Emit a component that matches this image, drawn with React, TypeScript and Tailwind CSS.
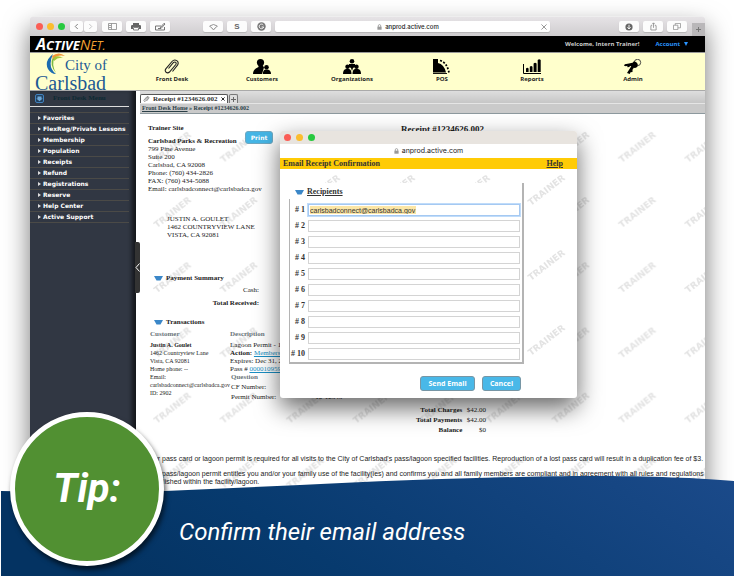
import React from "react";

const serif = "font-['Liberation_Serif',serif]";
const sans = "font-['Liberation_Sans',sans-serif]";
const ui = "font-['Open_Sans',sans-serif]";

function Watermark({ id, tile, x, y, color }: { id: string; tile: number[]; x: number; y: number; color: string }) {
  return (
    <svg className="pointer-events-none absolute inset-0 h-full w-full" aria-hidden="true">
      <defs>
        <pattern id={id} width={tile[0]} height={tile[1]} patternUnits="userSpaceOnUse" x={x} y={y}>
          <text
            transform="translate(5 37) rotate(-38)"
            className="font-['DejaVu_Sans',sans-serif] text-[9px] font-bold"
            fill={color}
          >
            TRAINER
          </text>
        </pattern>
      </defs>
      <rect width="100%" height="100%" fill={`url(#${id})`} />
    </svg>
  );
}

function Lights({ className }: { className: string }) {
  return (
    <div className={`flex items-center ${className}`}>
      <span className="size-[7px] rounded-full bg-[#fb5d55]" />
      <span className="size-[7px] rounded-full bg-[#fbbd2e]" />
      <span className="size-[7px] rounded-full bg-[#27c93f]" />
    </div>
  );
}

function ToolButton({ label, className = "w-[20px]", children }: { label: string; className?: string; children: React.ReactNode }) {
  return (
    <button
      aria-label={label}
      className={`flex h-[11px] shrink-0 items-center justify-center rounded-[2px] bg-[#fcfcfc] text-[#666] shadow-[0_1px_1px_rgba(0,0,0,0.15)] ${className}`}
    >
      {children}
    </button>
  );
}

function Lock() {
  return (
    <svg viewBox="0 0 8 10" className="h-[6px] w-[5px]" aria-hidden="true">
      <path d="M2 5V3a2 2 0 0 1 4 0v2" fill="none" stroke="#888" strokeWidth="1.2" />
      <rect x="0.5" y="4.5" width="7" height="5" fill="#999" />
    </svg>
  );
}

const stroke = { fill: "none", stroke: "currentColor", strokeWidth: 1 };

function Toolbar() {
  return (
    <div className="flex h-5 items-center rounded-t-[3px] border-t border-[#eee] bg-linear-to-b from-[#e6e3e6] to-[#cfcdcf] pl-[6px]">
      <Lights className="mr-[5px] gap-1" />
      <div className="flex gap-px">
        <ToolButton label="Back" className="w-[13px]">
          <svg viewBox="0 0 6 8" className="h-[7px] w-[5px]"><path d="M4.5 1 1.5 4l3 3" {...stroke} /></svg>
        </ToolButton>
        <ToolButton label="Forward" className="w-[13px]">
          <svg viewBox="0 0 6 8" className="h-[7px] w-[5px] text-[#bbb]"><path d="m1.5 1 3 3-3 3" {...stroke} /></svg>
        </ToolButton>
      </div>
      <div className="ml-[5px] flex gap-1">
        <ToolButton label="Sidebar">
          <svg viewBox="0 0 9 7" className="h-[7px] w-[9px] text-[#888]"><path d="M.5.5h8v6h-8zM3.5.5v6M1 2.5h2M1 4.5h2" {...stroke} strokeWidth={0.8} /></svg>
        </ToolButton>
        <ToolButton label="Print">
          <svg viewBox="0 0 10 8" className="h-[8px] w-[10px]">
            <path d="M2 0h6v2H2zM1.200 2h7.600q1.200 0 1.200 1v3H8V4H2v2H0V3q0-1 1.200-1z" fill="#666" />
            <path d="M2.500 4.500h5v2.500h-5z" fill="#fff" stroke="#666" strokeWidth="0.800" />
          </svg>
        </ToolButton>
        <ToolButton label="Annotate">
          <svg viewBox="0 0 11 8" className="h-[8px] w-[11px]"><path d="M6 3H.5v4h9V4M3 5.500h3l4-4.500-1-.7L5 5" {...stroke} strokeWidth={0.9} /></svg>
        </ToolButton>
      </div>
      <div className="ml-[33px] flex gap-1">
        <ToolButton label="Pocket">
          <svg viewBox="0 0 9 8" className="h-[8px] w-[9px] text-[#888]"><path d="M.7 3Q4.500 0 8.300 3 7.500 4.500 6 5L4.500 7 3 5Q1.500 4.500.7 3z" {...stroke} strokeWidth={0.9} /></svg>
        </ToolButton>
        <ToolButton label="Share S">
          <span className={`${sans} text-[8px] leading-none font-bold`}>S</span>
        </ToolButton>
        <ToolButton label="Reader">
          <svg viewBox="0 0 9 9" className="size-[9px]">
            <circle cx="4.500" cy="4.500" r="4.200" fill="#777" />
            <path d="M6.300 3A2.300 2.300 0 1 0 6.700 5H4.600" fill="none" stroke="#fff" strokeWidth="0.900" />
          </svg>
        </ToolButton>
      </div>
      <div className="ml-[4px] flex h-[11px] flex-1 items-center rounded-[2px] bg-white pr-[3px] shadow-[0_1px_1px_rgba(0,0,0,0.15)]">
        <div className="flex flex-1 items-center justify-center gap-[3px]">
          <Lock />
          <span className="font-['Inter',sans-serif] text-[6px] leading-[10px] font-medium text-[#222]">anprod.active.com</span>
        </div>
        <button aria-label="Stop loading" className="text-[#888]">
          <svg viewBox="0 0 7 7" className="size-[6px]"><path d="m.5.5 6 6m0-6-6 6" {...stroke} /></svg>
        </button>
      </div>
      <div className="mr-[5px] ml-[69px] flex gap-1">
        <ToolButton label="Downloads">
          <svg viewBox="0 0 8 8" className="size-[8px]"><circle cx="4" cy="4" r="3.600" fill="#666" /><path d="M4 1.800v4M2.400 4.200 4 6l1.600-1.800" fill="none" stroke="#fff" strokeWidth="0.900" /></svg>
        </ToolButton>
        <ToolButton label="Share">
          <svg viewBox="0 0 8 10" className="h-[9px] w-[7px] text-[#888]"><path d="M2.500 4H1v5h6V4H5.500M4 6.500V1M2.300 2.500 4 .8l1.700 1.700" {...stroke} strokeWidth={0.9} /></svg>
        </ToolButton>
        <ToolButton label="Tabs">
          <svg viewBox="0 0 9 8" className="h-[7px] w-[8px] text-[#888]"><path d="M.5 2.500h5v5h-5zM2.500 2.500v-2h6v5h-3" {...stroke} strokeWidth={0.8} /></svg>
        </ToolButton>
      </div>
      <button aria-label="New tab" className="flex h-[13px] w-[13px] items-center justify-center self-end bg-[#b9b7b9] text-[#777]">
        <svg viewBox="0 0 7 7" className="size-[7px]"><path d="M3.500 1v5M1 3.500h5" {...stroke} /></svg>
      </button>
    </div>
  );
}

const icons: Record<string, React.ReactNode> = {
  "Front Desk": <path d="m6.500 9.500 5-6q1.300-1 2.200-.2.900.9.100 2.200L7.500 13q-1.700 1.600-3.400.3-1.600-1.500-.3-3.400L10 2.500q2.200-2.500 4.800-.9 2.400 1.900.7 4.500L10.500 12.500" transform="translate(-1 0)" fill="none" stroke="#222" strokeWidth="1.100" />,
  Customers: (
    <g>
      <circle cx="7.500" cy="3.600" r="3.600" />
      <path d="M5.500 6h4l1.500 2.500L9 15H0q0-5 5.500-7z" />
      <circle cx="13.500" cy="8.300" r="2.300" />
      <path d="M9.800 15q0-4 2.700-4.500h2Q18 11 18 15z" />
    </g>
  ),
  Organizations: (
    <g>
      <circle cx="9" cy="2.300" r="2.300" />
      <path d="M6 5h6v3l-2 1-1 3-1-3-2-1z" />
      <circle cx="4.500" cy="7.800" r="2.200" />
      <circle cx="13.500" cy="7.800" r="2.200" />
      <path d="M0 15q0-4.500 3-5h3q2.500.5 2.500 5zM9.500 15q0-4.500 2.500-5h3q3 .5 3 5z" />
    </g>
  ),
  POS: (
    <g>
      <path d="M0 0h5v4q6 1 8 9.500H0z" />
      <path d="M0 14.600h14" stroke="#000" strokeWidth="1" />
      <path d="M7 1.500q7 2 9 12" fill="none" stroke="#000" strokeWidth="1.800" strokeDasharray="2 1.500" />
    </g>
  ),
  Reports: (
    <g>
      <path d="M.5 5v9.500H18" fill="none" stroke="#000" />
      <path d="M3 9.500q1.300-1.500 2.600 0V13H3zM6.800 7.800q1.300-1.500 2.700 0V13H6.800zM10.600 4.500q1.500-1.500 3 0V13h-3zM14.700 1q1.500-1.500 3 0v12h-3z" />
    </g>
  ),
  Admin: (
    <g>
      <circle cx="13.500" cy="3.500" r="3.200" fill="none" stroke="#333" strokeWidth="0.900" />
      <path d="M9.500 2.500q3-.5 4.200 2.500.5 3.500-2.700 4l-1.200-.2-1.300 2L8.500 13l-2 .2L5.800 15 3 14l3.800-6z" />
      <path d="M9.500 3.500 5 4.600.8 5.300 0 6.800l2 .4 1.200-.4.300 1.400L5.300 8l.7-1 3 .5z" />
    </g>
  ),
};

function Header() {
  return (
    <header>
      <div className="flex h-[17px] items-center justify-between border-b border-[#999] bg-black pr-[17px] pl-[6px]">
        <div className="flex items-baseline font-['Open_Sans',sans-serif] leading-none italic">
          <span className="text-[16px] font-bold text-white">A</span>
          <span className="text-[13px] font-bold text-white">CTIVE</span>
          <span className="text-[15px] text-[#f0a030]">N</span>
          <span className="text-[12px] text-[#f0a030]">ET.</span>
        </div>
        <div className={`flex gap-4 ${ui} text-[6px] font-bold`}>
          <span className="text-[#ccc]">Welcome, Intern Trainer!</span>
          <a href="#account" className="flex items-center gap-1 text-[#2a94ff]">
            Account
            <svg viewBox="0 0 4 4" className="size-1"><path d="M0 0h4L2 4z" fill="currentColor" /></svg>
          </a>
        </div>
      </div>
      <div className="flex h-[38px] border-b border-[#aaa] bg-[#ffffcc]">
        <div className="relative flex w-[97px] shrink-0 flex-col pl-[5px] font-['Liberation_Serif',serif] text-[#1d5a94]">
          <span className="pt-1 pl-[30px] text-[15px] leading-[16px]">City of</span>
          <span className="text-[20px] leading-[20px]">Carlsbad</span>
          <svg viewBox="0 0 22 22" className="absolute top-0 left-4 size-[22px]" aria-hidden="true">
            <path d="M7 1Q-2 8 2 16q3 5 8 5Q1 14 7 1z" fill="#1b6bb0" />
            <path d="M7 4Q3 12 10 20 5 11 9 4z" fill="#79b840" />
            <path d="M6 3q7-5 13 0-7-2-12 3z" fill="#f1963a" />
            <path d="M8 4q5-2 9 1-5-1-9 3z" fill="#a5c63b" />
          </svg>
        </div>
        <nav className="grid flex-1 grid-cols-[90fr_90fr_90fr_90fr_90fr_112fr] pr-4">
          {Object.keys(icons).map((name) => (
            <a key={name} href="#nav" className={`flex flex-col items-center pt-[6px] ${ui} text-[6px] leading-[10px] font-bold text-[#222]`}>
              <svg viewBox="0 0 18 15" className="h-[15px] w-[18px]" aria-hidden="true">{icons[name]}</svg>
              {name}
            </a>
          ))}
        </nav>
      </div>
    </header>
  );
}

const menu = ["Favorites", "FlexReg/Private Lessons", "Membership", "Population", "Receipts", "Refund", "Registrations", "Reserve", "Help Center", "Active Support"];

function Sidebar() {
  return (
    <aside className="relative w-[106px] shrink-0 bg-[#313743] shadow-[inset_-6px_0_4px_-2px_#15171c]">
      <div className={`mr-[7px] flex h-4 items-center gap-[9px] border-b border-[#ddd] pl-[5px] ${serif} text-[7px] font-bold text-[#0d2a33]`}>
        <svg viewBox="0 0 9 9" className="size-[9px]" aria-hidden="true">
          <rect x="0.500" y="0.500" width="8" height="8" rx="1.500" fill="#22405f" stroke="#4181bd" />
          <path d="M2.500 2.500h4v2h1.200L4.500 7.300 1.300 4.500h1.200z" fill="#6fa8d8" />
        </svg>
        Front Desk Menu
      </div>
      <ul className="mt-[5px] mr-[7px] border-t border-[#4b4a47]">
        {menu.map((item) => (
          <li key={item} className="h-[11px] border-b border-[#4b4a47]">
            <a href="#menu" className="flex items-center gap-[2px] pl-2 font-['DejaVu_Sans',sans-serif] text-[6px] leading-[10px] font-bold text-white">
              <svg viewBox="0 0 3 4" className="h-1 w-[3px]" aria-hidden="true"><path d="M0 0l3 2-3 2z" fill="#ddd" /></svg>
              {item}
            </a>
          </li>
        ))}
      </ul>
      <button aria-label="Collapse menu" className="absolute top-[151px] -right-1 flex h-[51px] w-[5px] items-center rounded-r-[2px] bg-[#333] text-white">
        <svg viewBox="0 0 5 9" className="h-[9px] w-[5px]"><path d="M4.500.5 1 4.500l3.500 4" {...stroke} /></svg>
      </button>
    </aside>
  );
}

function SectionTitle({ children, className = "" }: { children: React.ReactNode; className?: string }) {
  return (
    <h2 className={`flex items-center gap-[3px] font-bold ${className}`}>
      <svg viewBox="0 0 9 5" className="h-[5px] w-[9px]" aria-hidden="true"><path d="M0 0h9L6.500 4.500h-4z" fill="#3b87c8" /></svg>
      {children}
    </h2>
  );
}

function Receipt() {
  return (
    <div className={`relative flex-1 ${serif} text-[7px] leading-[8px] text-[#222]`}>
      <Watermark id="page-mark" tile={[66.4, 65.2]} x={12} y={12} color="#e3e3e3" />
      <div className="relative flex flex-col pt-[10px] pl-2">
        <div className="flex items-start">
          <div className="w-[97px] shrink-0 whitespace-nowrap">
            <p className="mb-[5px] font-bold">Trainer Site</p>
            <p className="font-bold">Carlsbad Parks &amp; Recreation</p>
            <p>799 Pine Avenue</p>
            <p>Suite 200</p>
            <p>Carlsbad, CA 92008</p>
            <p>Phone: (760) 434-2826</p>
            <p>FAX: (760) 434-5088</p>
            <p>Email: carlsbadconnect@carlsbadca.gov</p>
          </div>
          <button className="mt-[7px] h-[13px] w-7 rounded-[3px] border border-[#6fa7c0] bg-[#45b5e5] font-['DejaVu_Sans',sans-serif] text-[6px] leading-none font-bold text-white">Print</button>
          <h1 className="ml-32 text-[9px] leading-[10px] font-bold">Receipt #1234626.002</h1>
        </div>
        <div className="mt-[22px] ml-[19px]">
          <p>JUSTIN A. GOULET</p>
          <p>1462 COUNTRYVIEW LANE</p>
          <p>VISTA, CA 92081</p>
        </div>
        <SectionTitle className="mt-[35px] ml-[6px]">Payment Summary</SectionTitle>
        <dl className="mt-[2px] w-[111px] text-right leading-[13px]">
          <dt>Cash:</dt>
          <dt className="font-bold">Total Received:</dt>
        </dl>
        <SectionTitle className="mt-2 ml-[6px]">Transactions</SectionTitle>
        <table className="mt-1 ml-[2px] w-[250px] table-fixed border-collapse text-left">
          <thead>
            <tr className="text-[#6b767b]">
              <th className="w-20 pb-[3px] font-bold">Customer</th>
              <th className="pb-[3px] font-bold">Description</th>
            </tr>
          </thead>
          <tbody>
            <tr className="align-top">
              <td className="text-[6px] leading-[8px] whitespace-nowrap">
                <b>Justin A. Goulet</b><br />1462 Countryview Lane<br />Vista, CA 92081<br />Home phone: --<br />Email:<br />carlsbadconnect@carlsbadca.gov<br />ID: 2902
              </td>
              <td className="whitespace-nowrap">
                Lagoon Permit - 1<br />
                <b>Action:</b> <a href="#m" className="text-[#1a8fc4] underline">Members</a><br />
                Expires: Dec 31, 2<br />
                Pass # <a href="#p" className="text-[#1a8fc4] underline">0000109599</a>
                <div className="ml-px">
                  <p className="font-bold text-[#6b767b]">Question</p>
                  <p className="mt-[2px]">CF Number:</p>
                  <p className="mt-[2px] flex gap-[39px]"><span>Permit Number:</span><span>10-12345</span></p>
                </div>
              </td>
            </tr>
          </tbody>
        </table>
        <table className="mt-1 ml-[267px] w-[71px] border-collapse text-right leading-[10px] whitespace-nowrap">
          <tbody>
            <tr><th className="pr-1 font-bold">Total Charges</th><td>$42.00</td></tr>
            <tr><th className="pr-1 font-bold">Total Payments</th><td>$42.00</td></tr>
            <tr><th className="pr-1 font-bold">Balance</th><td>$0</td></tr>
          </tbody>
        </table>
        <div className={`mt-5 -ml-0.5 ${sans} text-[7px] leading-[8px] whitespace-nowrap`}>
          <p>Your pass card or lagoon permit is required for all visits to the City of Carlsbad's pass/lagoon specified facilities. Reproduction of a lost pass card will result in a duplication fee of $3.</p>
          <p className="mt-[7px]">Your pass/lagoon permit entitles you and/or your family use of the facility(ies) and confirms you and all family members are compliant and in agreement with all rules and regulations<br />established within the facility/lagoon.</p>
        </div>
      </div>
    </div>
  );
}

function Dialog() {
  return (
    <div role="dialog" aria-label="Email Receipt Confirmation" className="absolute top-[131px] left-[280px] w-[297px] overflow-hidden rounded-[3px] bg-white shadow-[0_10px_24px_rgba(0,0,0,0.6)]">
      <div className="flex h-[13px] items-center bg-[#e8e4df] pl-1"><Lights className="gap-[5px]" /></div>
      <div className="flex h-[14px] items-center justify-center gap-[3px] font-['Inter',sans-serif] text-[7px] text-[#222]">
        <Lock />anprod.active.com
      </div>
      <div className={`flex h-[11px] items-center justify-between bg-[#ffcb05] pr-[14px] pl-[3px] ${serif} text-[8px] leading-none font-bold text-[#333]`}>
        <span>Email Receipt Confirmation</span>
        <a href="#help" className="underline">Help</a>
      </div>
      <div className="relative pt-[14px] pb-[7px]">
        <Watermark id="dialog-mark" tile={[75, 75]} x={-54} y={0} color="#e3e3e3" />
        <form className="relative ml-[9px] w-[235px]">
          <div className={`border-r-2 border-[#b4b4b4] bg-white pt-1 ${serif} text-[8px] font-bold text-[#333]`}>
            <SectionTitle className="mb-[2px] ml-[6px] leading-[10px] underline">Recipients</SectionTitle>
            <div className="flex flex-col gap-1 border-b-2 border-l border-[#b4b4b4] pt-[5px] pb-[2px]">
              {Array.from({ length: 10 }, (_, i) => (
                <div key={i} className="flex h-3 items-center gap-[3px] pr-[2px]">
                  <label htmlFor={`recipient-${i + 1}`} className="w-[15px] shrink-0 text-right leading-[12px] whitespace-nowrap"># {i + 1}</label>
                  <input
                    id={`recipient-${i + 1}`}
                    defaultValue={i === 0 ? "carlsbadconnect@carlsbadca.gov" : ""}
                    className={
                      i === 0
                        ? "h-3 min-w-0 flex-1 border border-[#a5c9f2] bg-[linear-gradient(#fbe6a6,#fbe6a6)] bg-[length:106px_8px] bg-[position:1px_center] bg-no-repeat px-px font-['Liberation_Sans',sans-serif] text-[7px] font-normal text-[#333] shadow-[0_0_0_1px_#c0dcfa]"
                        : "h-3 min-w-0 flex-1 border border-[#d4d4d4] bg-white px-px font-['Liberation_Sans',sans-serif] text-[7px] font-normal"
                    }
                  />
                </div>
              ))}
            </div>
          </div>
          <div className={`mt-3 mr-[3px] flex justify-end gap-[7px] ${ui} text-[7px] leading-none font-bold text-white`}>
            <button type="button" className="h-[15px] w-[55px] rounded-[3px] border border-[#7796a5] bg-[#49b8e8]">Send Email</button>
            <button type="button" className="h-[15px] w-[39px] rounded-[3px] border border-[#7796a5] bg-[#49b8e8]">Cancel</button>
          </div>
        </form>
      </div>
    </div>
  );
}

export default function App() {
  return (
    <main className="relative flex min-h-screen flex-col overflow-hidden bg-white pt-4">
      <div className="mr-[29px] ml-[30px] flex flex-1 flex-col rounded-t-[3px] bg-white shadow-[0_12px_26px_rgba(0,0,0,0.55)]">
        <Toolbar />
        <Header />
        <div className="flex flex-1">
          <Sidebar />
          <section className="flex min-w-0 flex-1 flex-col pl-1">
            <div className="flex h-3 items-end gap-px bg-linear-to-b from-[#dedede] to-[#c6c6c6]">
              <div className={`flex h-[9px] items-center gap-[3px] rounded-t-[2px] border border-b-0 border-[#555] bg-white px-[2px] ${serif} text-[7px] leading-none font-bold text-[#333]`}>
                <svg viewBox="0 0 18 15" className="h-[6px] w-[7px]" aria-hidden="true">{icons["Front Desk"]}</svg>
                Receipt #1234626.002
                <button aria-label="Close tab"><svg viewBox="0 0 5 5" className="size-1"><path d="m.5.5 4 4m0-4-4 4" fill="none" stroke="#222" strokeWidth="1.200" /></svg></button>
              </div>
              <button aria-label="Add tab" className="flex h-[9px] w-[9px] items-center justify-center rounded-t-[2px] border border-b-0 border-[#777] bg-[#ddd] text-[#666]">
                <svg viewBox="0 0 7 7" className="size-[7px]"><path d="M3.500 1v5M1 3.500h5" {...stroke} /></svg>
              </button>
            </div>
            <div className={`h-[11px] border-t border-b border-t-[#e5e5e5] border-b-[#8d999e] bg-[#cacaca] pl-[2px] ${serif} text-[6px] leading-[9px] font-bold text-[#2b4048]`}>
              <a href="#home" className="underline">Front Desk Home</a> » Receipt #1234626.002
            </div>
            <Receipt />
          </section>
        </div>
      </div>
      <Dialog />
      <footer className="absolute inset-x-0 bottom-0 h-[100px]">
        <svg viewBox="0 0 734 100" preserveAspectRatio="none" className="absolute inset-0 h-full w-full" aria-hidden="true">
          <defs>
            <linearGradient id="banner" x1="0" y1="0.200" x2="1" y2="0">
              <stop offset="0" stopColor="#043362" />
              <stop offset="0.300" stopColor="#073a6e" />
              <stop offset="1" stopColor="#1b4a8a" />
            </linearGradient>
          </defs>
          <path d="M1 15Q82 17 165 15L300 9C400 4 520 0 590 0 650 0 700 2 734 5V100H1z" fill="url(#banner)" />
        </svg>
        <p className="relative pt-10 pl-[179px] font-['Roboto',sans-serif] text-[24px] leading-8 font-normal text-white italic">Confirm their email address</p>
        <div className="absolute -top-16 left-[10px] flex size-[154px] items-center justify-center rounded-full border-[5px] border-white bg-[#519032] shadow-[2px_4px_5px_rgba(0,0,0,0.6)]">
          <span className="font-['Roboto',sans-serif] text-[40px] leading-none font-bold text-white italic">Tip:</span>
        </div>
      </footer>
    </main>
  );
}
